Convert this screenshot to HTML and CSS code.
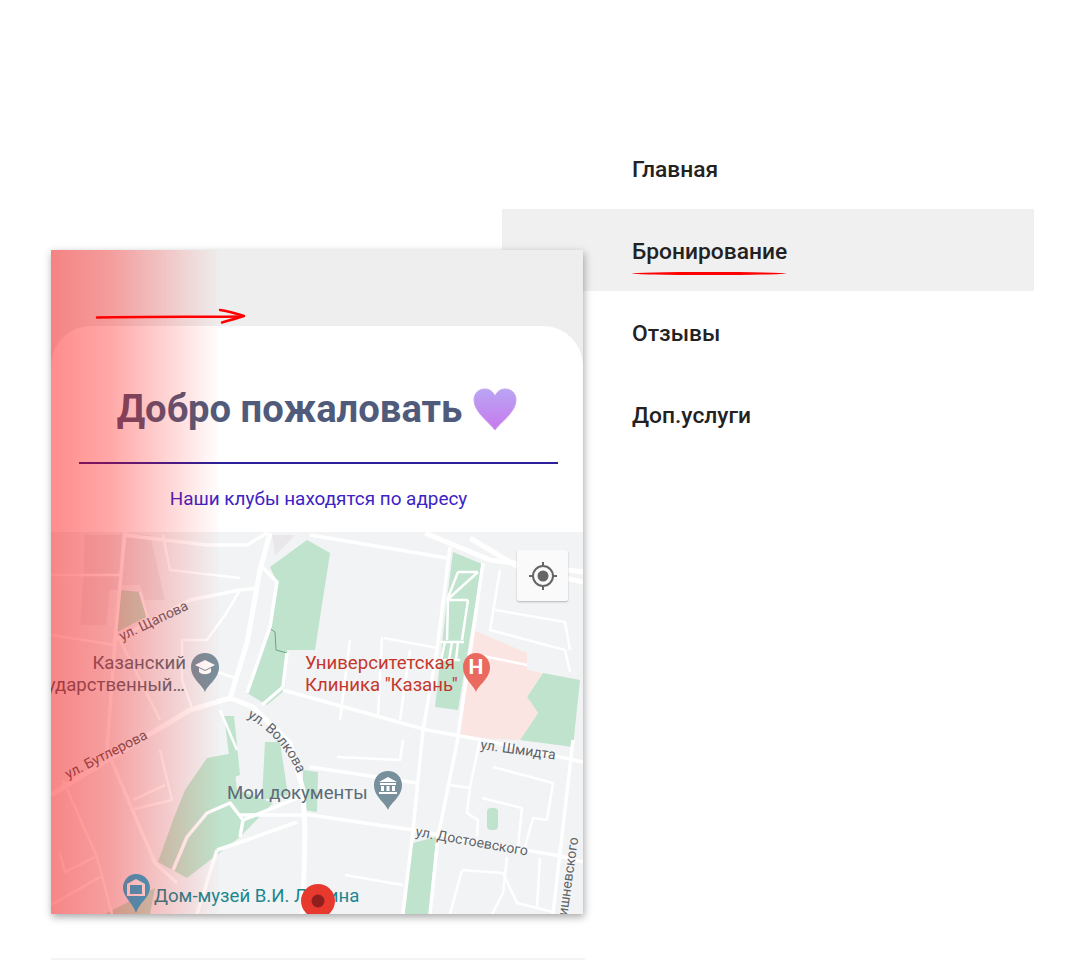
FILE: index.html
```html
<!DOCTYPE html>
<html lang="ru">
<head>
    <meta charset="UTF-8">
    <meta name="viewport" content="width=device-width, initial-scale=1.0">
    <title>Бронирование</title>
    <link rel="stylesheet" href="styles.css">
</head>
<body>
    <div class="page">
        <!-- Menu -->
        <nav class="menu">
            <a class="menu-item">Главная</a>
            <a class="menu-item active"><span>Бронирование</span></a>
            <a class="menu-item">Отзывы</a>
            <a class="menu-item">Доп.услуги</a>
        </nav>

        <!-- Phone screen, lies over the menu -->
        <div class="screen">
            <div class="screen-top">
                <svg class="arrow" width="152" height="16" viewBox="0 0 152 16">
                    <path d="M2 9.500 C50 8.500 100 9 146 8.500" fill="none" stroke="#f00" stroke-width="2.500" stroke-linecap="round"/>
                    <path d="M125 2 C133 3 141 5.500 149 8 C141 10.500 134 12.500 127 14.500" fill="none" stroke="#f00" stroke-width="2.500" stroke-linecap="round" stroke-linejoin="round"/>
                </svg>
            </div>
            <div class="welcome">
                <h1>Добро пожаловать
                    <svg class="heart" width="44" height="43" viewBox="0 0 44 43">
                        <defs>
                            <linearGradient id="heartFill" x1="0" y1="0" x2="0" y2="1">
                                <stop offset="0" stop-color="#b9a5f3"/>
                                <stop offset="1" stop-color="#c878ee"/>
                            </linearGradient>
                        </defs>
                        <path d="M22 42 C16 34 1 24 1 12 C1 5 6 1 12 1 C17 1 20 4 22 8 C24 4 27 1 32 1 C38 1 43 5 43 12 C43 24 28 34 22 42Z" fill="url(#heartFill)" stroke="#c9a4ee" stroke-width="1"/>
                    </svg>
                </h1>
                <hr class="divider">
                <p class="address">Наши клубы находятся по адресу</p>
            </div>
            <div class="map">
                <svg class="map-img" width="532" height="382" viewBox="51 532 532 382">
                    <defs>
                        <path id="volkova" d="M247 717 C265 727 285 745 297 772"/>
                    </defs>
                    <rect x="51" y="532" width="532" height="382" fill="#f1f3f4"/>

                    <!-- buildings -->
                    <path class="block" d="M85 535 H122 L118 590 H110 L106 625 H80 L84 570Z"/>
                    <path class="block" d="M125 535 H150 L165 600 H145 L140 585 H120Z"/>
                    <path class="block" d="M272 535 H295 L275 556Z"/>

                    <!-- parks -->
                    <path class="park" d="M307 540 L330 553 L315 650 L287 650 L285 690 L267 705 L247 693 L270 627 L277 582 L270 567Z"/>
                    <path class="park" d="M120 590 L140 592 L146 617 L115 633Z"/>
                    <path class="park" d="M453 552 L482 564 L458 710 L435 707 L447 600Z"/>
                    <path class="park" d="M543 673 L580 680 L573 747 L520 740 L538 713 L527 697Z"/>
                    <path class="park" d="M207 758 L233 753 L237 790 L273 803 L240 837 L187 878 L158 862 L173 820 L185 790Z"/>
                    <path class="park" d="M224 716 L234 716 L240 775 L232 778Z"/>
                    <path class="park" d="M265 742 L280 742 L288 795 L262 800Z"/>
                    <path class="park" d="M303 770 L318 772 L317 812 L303 810Z"/>
                    <path class="park" d="M413 843 L436 837 L429 914 L403 914Z"/>
                    <path class="park" d="M155 888 L150 914 L105 914Z"/>
                    <rect class="park" x="487" y="808" width="11" height="22" rx="4"/>
                    <path class="hospital" d="M473 630 L527 653 L527 670 L542 673 L527 697 L538 713 L520 740 L458 737Z"/>
                    <path d="M269 628 L275 632 L276 650 L287 653" fill="none" stroke="#6aa585" stroke-width="1"/>

                    <!-- main roads -->
                    <g class="road-lg">
                        <path d="M270 533 L260 570 L247 643 L230 698"/>
                        <path d="M230 698 L190 710 L140 740 L51 795"/>
                        <path d="M230 698 L253 707 L290 743 L303 790 L305 830 L303 914"/>
                        <path d="M425 533 L490 560 L583 572"/>
                        <path d="M470 538 L520 568 L583 582"/>
                    </g>
                    <!-- streets -->
                    <g class="road">
                        <path d="M123 535 L207 545 L247 545 L267 533"/>
                        <path d="M262 567 L277 582 L270 627"/>
                        <path d="M270 627 L247 693"/>
                        <path d="M287 653 L283 687 L262 705"/>
                        <path d="M115 640 L190 600 L240 590 L258 588"/>
                        <path d="M125 532 L115 640 L107 750 L155 863 L177 883"/>
                        <path d="M310 535 L447 558"/>
                        <path d="M450 547 L437 650 L423 730 L413 830 L403 914"/>
                        <path d="M483 563 L457 743 L438 837 L430 914"/>
                        <path d="M283 690 L427 730 L483 740 L583 762"/>
                        <path d="M310 767 L417 783"/>
                        <path d="M240 815 L310 815 L413 830 L560 856 L583 862"/>
                        <path d="M573 740 L553 914"/>
                        <path d="M173 870 L187 837 L207 813 L230 803 L243 820 L240 837"/>
                        <path d="M243 820 L300 797"/>
                        <path d="M217 850 L247 840 L297 822"/>
                        <path d="M217 850 L197 914"/>
                    </g>
                    <g class="road-sm">
                        <path d="M51 575 L120 575"/>
                        <path d="M51 635 L115 645"/>
                        <path d="M163 535 L170 570 L240 578"/>
                        <path d="M240 590 L225 615 L207 640 L182 640 L182 680 L192 708"/>
                        <path d="M212 670 L235 678"/>
                        <path d="M140 592 L150 625"/>
                        <path d="M220 710 L237 750"/>
                        <path d="M500 570 L490 630 L565 650 L570 672"/>
                        <path d="M495 610 L565 622 L570 650"/>
                        <path d="M384 638 L437 648"/>
                        <path d="M382 637 L378 717"/>
                        <path d="M410 650 L400 720"/>
                        <path d="M350 640 L340 720"/>
                        <path d="M478 655 L527 665"/>
                        <path d="M458 572 L478 572"/>
                        <path d="M458 572 L447 600"/>
                        <path d="M478 572 L447 600"/>
                        <path d="M448 600 L447 640"/>
                        <path d="M468 600 L462 640"/>
                        <path d="M447 600 H468"/>
                        <path d="M440 642 H464"/>
                        <path d="M445 642 L441 660"/>
                        <path d="M452 642 L449 660"/>
                        <path d="M458 642 L456 660"/>
                        <path d="M437 660 H460"/>
                        <path d="M337 757 L400 760 L403 740"/>
                        <path d="M345 875 L403 885"/>
                        <path d="M450 785 L470 788 L467 813 L478 820 L477 837"/>
                        <path d="M480 740 L470 787"/>
                        <path d="M482 798 L522 808 L518 847"/>
                        <path d="M493 767 L553 783 L547 820 L533 818 L525 847"/>
                        <path d="M462 870 L503 873 L517 903 L553 912"/>
                        <path d="M462 870 L450 914"/>
                        <path d="M507 857 L503 893 L492 914"/>
                        <path d="M540 858 L537 907"/>
                        <path d="M60 853 L65 872 L95 857"/>
                        <path d="M51 905 L100 877"/>
                        <path d="M63 780 L97 857 L112 914"/>
                        <path d="M133 800 L165 785"/>
                        <path d="M160 750 L172 800 L130 810"/>
                        <path d="M120 640 L160 720"/>
                    </g>

                    <!-- labels -->
                    <text class="street" transform="translate(122 641) rotate(-25.500)">ул. Щапова</text>
                    <text class="street" transform="translate(68 779) rotate(-27)">ул. Бутлерова</text>
                    <text class="street"><textPath href="#volkova">ул. Волкова</textPath></text>
                    <text class="street" transform="translate(480 749) rotate(8)">ул. Шмидта</text>
                    <text class="street" transform="translate(415 836) rotate(10)">ул. Достоевского</text>
                    <text class="street" transform="translate(566 925) rotate(-82)">Вишневского</text>

                    <text class="poi gray" x="186" y="669" text-anchor="end">Казанский</text>
                    <text class="poi gray" x="185" y="691" text-anchor="end">Государственный…</text>
                    <text class="poi red" x="305" y="669">Университетская</text>
                    <text class="poi red" x="305" y="691">Клиника "Казань"</text>
                    <text class="poi gray" x="227" y="799">Мои документы</text>
                    <text class="poi teal" x="154" y="902">Дом-музей В.И. Ленина</text>

                    <!-- pins -->
                    <path class="pin-gray" d="M205 692 C202 684 191 679 191 667 C191 659 197 653 205 653 C213 653 219 659 219 667 C219 679 208 684 205 692Z"/>
                    <path d="M205 660 L215 665 L205 670 L195 665Z" fill="#fff"/>
                    <path d="M199 668 V672 C202 675 208 675 211 672 V668 L205 671Z" fill="#fff"/>

                    <path class="pin-red" d="M476 692 C473 684 463 679 463 667 C463 659 469 653 476 653 C483 653 490 659 490 667 C490 679 479 684 476 692Z"/>
                    <text class="pin-letter" x="476" y="674" text-anchor="middle">H</text>

                    <path class="pin-gray" d="M388 810 C385 802 374 797 374 785 C374 777 380 771 388 771 C396 771 402 777 402 785 C402 797 391 802 388 810Z"/>
                    <path d="M388 777 L397 782 H379Z M380 783 H396 V785 H380Z M381 786 H384 V791 H381Z M386.500 786 H389.500 V791 H386.500Z M392 786 H395 V791 H392Z M379 792 H397 V794 H379Z" fill="#fff"/>

                    <path class="pin-teal" d="M136 913 C133 903 123 897 123 888 C123 880 129 874 136 874 C144 874 150 880 150 888 C150 897 139 903 136 913Z"/>
                    <path d="M136 879 L145 884 V896 H127 V884Z" fill="#fff"/>
                    <rect x="130" y="885" width="12" height="9" fill="#1cb5e0"/>

                    <!-- current position -->
                    <circle cx="318" cy="901" r="17" fill="#e8392f"/>
                    <circle cx="318" cy="901" r="6.500" fill="#8f1f1f"/>
                </svg>
                <div class="locate">
                    <svg width="30" height="30" viewBox="0 0 30 30">
                        <circle cx="15" cy="15" r="10" fill="none" stroke="#666" stroke-width="2"/>
                        <circle cx="15" cy="15" r="5.500" fill="#666"/>
                        <path d="M15 1 V6 M15 24 V29 M1 15 H6 M24 15 H29" stroke="#666" stroke-width="2"/>
                    </svg>
                </div>
            </div>
            <div class="fade"></div>
        </div>

        <div class="next-card"></div>
    </div>
</body>
</html>
```

FILE: styles.css
```css
body {
    background-color: #fff;
    color: #222;
    font-family: Roboto, "Liberation Sans", sans-serif;
    margin: 0;
    padding: 0;
}
.page {
    position: relative;
    width: 1080px;
    height: 960px;
    overflow: hidden;
}

/* Menu */
.menu {
    width: 532px;
    margin-left: 502px;
    padding-top: 127px;
}
.menu-item {
    display: block;
    height: 82px;
    line-height: 85px;
    padding-left: 130px;
    font-size: 22.800px;
    font-weight: 500;
    color: #222;
}
.menu-item.active {
    background-color: #f0f0f0;
}
.menu-item.active span {
    position: relative;
    display: inline-block;
}
.menu-item.active span::after {
    content: "";
    position: absolute;
    left: 0;
    right: 1px;
    bottom: 19px;
    height: 3px;
    background-color: #f00;
    border-radius: 50%;
}

/* Phone screen */
.screen {
    position: absolute;
    left: 51px;
    top: 250px;
    width: 532px;
    height: 664px;
    background-color: #eee;
    box-shadow: 1px 3px 8px rgba(0, 0, 0, 0.35);
}
.screen-top {
    height: 76px;
}
.arrow {
    display: block;
    margin-left: 44px;
    padding-top: 58px;
}
.welcome {
    height: 206px;
    box-sizing: border-box;
    padding-top: 57px;
    background-color: #fff;
    border-radius: 40px 40px 0 0;
    text-align: center;
}
h1 {
    display: flex;
    justify-content: center;
    align-items: center;
    gap: 11px;
    height: 52px;
    margin: 0;
    font-size: 38.200px;
    font-weight: 700;
    color: #505b7b;
}
.divider {
    width: 479px;
    height: 2px;
    margin: 27px 0 0 28px;
    border: none;
    background-color: #2c1f98;
}
.address {
    margin: 22px 0 0;
    padding-left: 3px;
    font-size: 18.900px;
    line-height: 26px;
    color: #3d22c4;
}

/* Map */
.map {
    position: relative;
    height: 382px;
    overflow: hidden;
}
.map-img {
    display: block;
}
.block {
    fill: #e9e7e9;
}
.park {
    fill: #bfe3cc;
}
.hospital {
    fill: #fbe5e2;
}
.road-lg path,
.road path,
.road-sm path {
    fill: none;
    stroke: #fff;
    stroke-linejoin: round;
}
.road-lg path {
    stroke-width: 5;
}
.road path {
    stroke-width: 3.500;
}
.road-sm path {
    stroke-width: 2.500;
}
.street {
    font-size: 14px;
    fill: #5f6368;
}
.poi {
    font-size: 18.600px;
}
.poi.gray {
    fill: #5b6b78;
}
.poi.red {
    fill: #c5372c;
}
.poi.teal {
    fill: #1b8791;
}
.pin-gray {
    fill: #78909c;
}
.pin-red {
    fill: #ea6a5f;
}
.pin-teal {
    fill: #1cb5e0;
}
.pin-letter {
    font-size: 21px;
    font-weight: 700;
    fill: #fff;
}
.locate {
    position: absolute;
    left: 466px;
    top: 18px;
    display: flex;
    align-items: center;
    justify-content: center;
    width: 51px;
    height: 51px;
    background-color: #fafafa;
    border-radius: 2px;
    box-shadow: 0 1px 2px rgba(0, 0, 0, 0.25);
}

/* Red fade over the left edge */
.fade {
    position: absolute;
    left: 0;
    top: 0;
    width: 100%;
    height: 100%;
    background: linear-gradient(to right, rgba(255, 0, 0, 0.45) 0, rgba(255, 0, 0, 0.34) 60px, rgba(255, 0, 0, 0) 170px);
    pointer-events: none;
}

.next-card {
    position: absolute;
    left: 51px;
    top: 958px;
    width: 534px;
    height: 2px;
    background-color: #f4f4f4;
}
```
